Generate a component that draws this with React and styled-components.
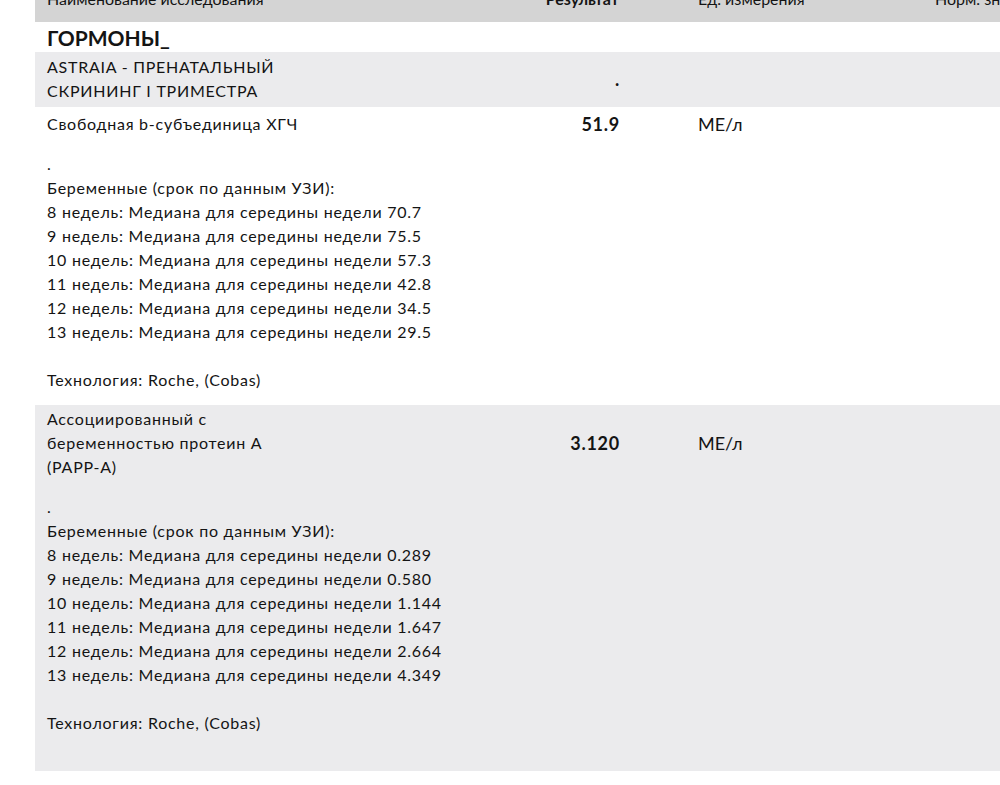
import React from 'react';
import styled, { createGlobalStyle } from 'styled-components';

const GlobalStyle = createGlobalStyle`
  html, body {
    margin: 0;
    padding: 0;
    background: #fff;
    overflow: hidden;
  }
  body {
    font-family: Lato, "Open Sans", "Liberation Sans", sans-serif;
    color: #141414;
    font-size: 16px;
    line-height: 24px;
  }
`;

const Page = styled.div`
  width: 1100px;
  margin-top: -14px;
  padding-left: 35px;
`;

const Cols = styled.div`
  display: grid;
  grid-template-columns: 473px 111px 316px 200px;
  align-items: center;
`;

const Header = styled(Cols)`
  background: #d4d4d4;
  padding: 1px 0 11px;
`;

const HeadCell = styled.div`
  padding-left: ${p => p.$pad || 0}px;
  text-align: ${p => p.$right ? 'right' : 'left'};
  font-weight: ${p => p.$bold ? 700 : 400};
  white-space: nowrap;
`;

const Section = styled.div`
  padding: 4px 12px 2px;
  font-size: 21px;
  font-weight: 700;
  line-height: 24px;
`;

const Row = styled.div`
  background: ${p => p.$gray ? '#ebebed' : '#fff'};
  padding: ${p => p.$top}px 0 ${p => p.$bottom}px;
  letter-spacing: 0.75px;
`;

const NameCell = styled.div`
  padding-left: 12px;
`;

const Name = styled.div`
  max-width: 270px;
`;

const Result = styled.div`
  text-align: right;
  font-weight: 700;
  font-size: 18px;
  margin-right: -1px;
`;

const Unit = styled.div`
  padding-left: 79px;
  font-size: 18px;
  letter-spacing: 0;
`;

const Details = styled.div`
  margin-top: 16px;
  padding-left: 12px;
`;

const Line = styled.div`
  min-height: 24px;
`;

const medians = {
  hcg: ['70.7', '75.5', '57.3', '42.8', '34.5', '29.5'],
  papp: ['0.289', '0.580', '1.144', '1.647', '2.664', '4.349'],
};

const Description = ({ values, trailing }) => (
  <Details>
    <Line>.</Line>
    <Line>Беременные (срок по данным УЗИ):</Line>
    {values.map((v, i) => (
      <Line key={v}>{i + 8} недель: Медиана для середины недели {v}</Line>
    ))}
    <Line />
    <Line>Технология: Roche, (Cobas)</Line>
    {trailing && <Line />}
  </Details>
);

export default function App() {
  return (
    <Page>
      <GlobalStyle />
      <Header>
        <HeadCell $pad={12}>Наименование исследования</HeadCell>
        <HeadCell $right $bold>Результат</HeadCell>
        <HeadCell $pad={79}>Ед. измерения</HeadCell>
        <HeadCell>Норм. значения</HeadCell>
      </Header>

      <Section>ГОРМОНЫ_</Section>

      <Row $gray $top={3} $bottom={4}>
        <Cols>
          <NameCell>
            <Name>ASTRAIA - ПРЕНАТАЛЬНЫЙ СКРИНИНГ I ТРИМЕСТРА</Name>
          </NameCell>
          <Result>.</Result>
          <Unit />
        </Cols>
      </Row>

      <Row $top={5} $bottom={13}>
        <Cols>
          <NameCell>
            <Name>Свободная b-субъединица ХГЧ</Name>
          </NameCell>
          <Result>51.9</Result>
          <Unit>МЕ/л</Unit>
        </Cols>
        <Description values={medians.hcg} />
      </Row>

      <Row $gray $top={2} $bottom={12}>
        <Cols>
          <NameCell>
            <Name>Ассоциированный с беременностью протеин А (PAPP-A)</Name>
          </NameCell>
          <Result>3.120</Result>
          <Unit>МЕ/л</Unit>
        </Cols>
        <Description values={medians.papp} trailing />
      </Row>
    </Page>
  );
}
